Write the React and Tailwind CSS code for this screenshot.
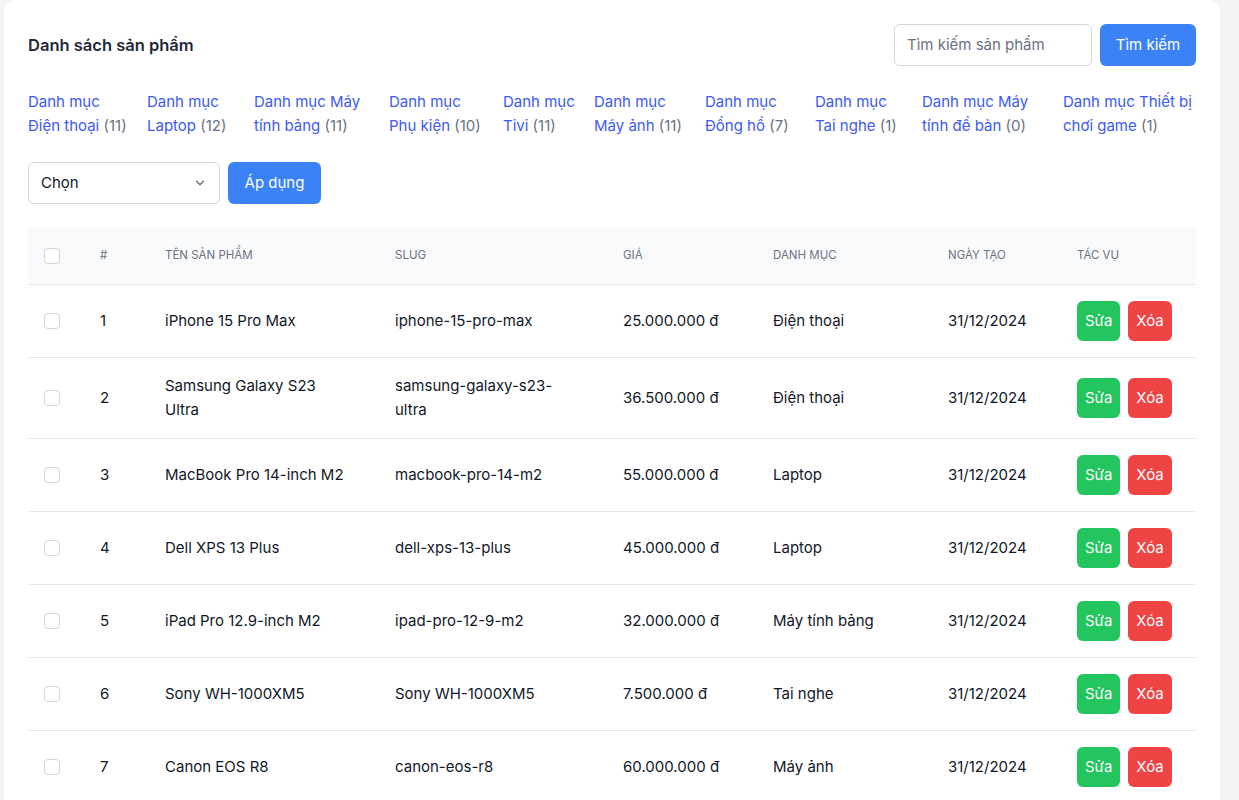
import React from "react";

const cats = [
  ["Danh mục", "Điện thoại", "(11)", "w-[119px]"],
  ["Danh mục", "Laptop", "(12)", "w-[107px]"],
  ["Danh mục Máy", "tính bảng", "(11)", "w-[135px]"],
  ["Danh mục", "Phụ kiện", "(10)", "w-[114px]"],
  ["Danh mục", "Tivi", "(11)", "w-[91px]"],
  ["Danh mục", "Máy ảnh", "(11)", "w-[111px]"],
  ["Danh mục", "Đồng hồ", "(7)", "w-[110px]"],
  ["Danh mục", "Tai nghe", "(1)", "w-[107px]"],
  ["Danh mục Máy", "tính để bàn", "(0)", "w-[141px]"],
  ["Danh mục Thiết bị", "chơi game", "(1)", "w-[133px]"],
];

const rows = [
  [1, "iPhone 15 Pro Max", "iphone-15-pro-max", "25.000.000 đ", "Điện thoại"],
  [2, "Samsung Galaxy S23 Ultra", "samsung-galaxy-s23-ultra", "36.500.000 đ", "Điện thoại"],
  [3, "MacBook Pro 14-inch M2", "macbook-pro-14-m2", "55.000.000 đ", "Laptop"],
  [4, "Dell XPS 13 Plus", "dell-xps-13-plus", "45.000.000 đ", "Laptop"],
  [5, "iPad Pro 12.9-inch M2", "ipad-pro-12-9-m2", "32.000.000 đ", "Máy tính bảng"],
  [6, "Sony WH-1000XM5", "Sony WH-1000XM5", "7.500.000 đ", "Tai nghe"],
  [7, "Canon EOS R8", "canon-eos-r8", "60.000.000 đ", "Máy ảnh"],
];

function Check() {
  return <div className="w-4 h-4 rounded border border-gray-300 bg-white" />;
}

export default function App() {
  return (
    <div
      className="min-h-screen bg-[#f3f4f6] pl-1 pr-[19px]"
      style={{ fontFamily: "Inter, 'Noto Sans', sans-serif" }}
    >
      <div className="bg-white rounded-t-xl px-6 pt-6 pb-6 text-[15px] text-[#111827]">
        <div className="flex items-center justify-between">
          <h2 className="text-[16.5px] font-semibold text-[#1f2937]">Danh sách sản phẩm</h2>
          <div className="flex items-center gap-2">
            <div className="w-[198px] h-[42px] border border-gray-300 rounded-md flex items-center px-3 text-[15px] text-gray-500">
              Tìm kiếm sản phẩm
            </div>
            <button className="h-[42px] w-[96px] rounded-md bg-[#3b82f6] text-white text-[15px]">Tìm kiếm</button>
          </div>
        </div>

        <div className="flex mt-[24px] leading-6">
          {cats.map(([a, b, c, w], i) => (
            <div key={i} className={`${w} shrink-0`}>
              <div className="text-[#3d5af1] whitespace-nowrap">{a}</div>
              <div className="whitespace-nowrap">
                <span className="text-[#3d5af1]">{b}</span>{" "}
                <span className="text-gray-500">{c}</span>
              </div>
            </div>
          ))}
        </div>

        <div className="flex items-center gap-2 mt-[24px]">
          <div className="w-[192px] h-[42px] border border-gray-300 rounded-md flex items-center justify-between pl-3 pr-3 text-[15px]">
            <span>Chọn</span>
            <svg width="14" height="14" viewBox="0 0 24 24" fill="none" stroke="#6b7280" strokeWidth="2.5" strokeLinecap="round" strokeLinejoin="round">
              <path d="M6 9l6 6 6-6" />
            </svg>
          </div>
          <button className="h-[42px] w-[93px] rounded-md bg-[#3b82f6] text-white text-[15px]">Áp dụng</button>
        </div>

        <table className="w-full table-fixed mt-[24px] border-collapse">
          <colgroup>
            <col className="w-[48px]" />
            <col className="w-[65px]" />
            <col className="w-[230px]" />
            <col className="w-[228px]" />
            <col className="w-[150px]" />
            <col className="w-[175px]" />
            <col className="w-[129px]" />
            <col className="w-[143px]" />
          </colgroup>
          <thead>
            <tr className="bg-[#f9fafb] border-b border-gray-200 h-[56px] text-left text-[11.5px] text-gray-500 uppercase">
              <th className="pl-4 font-normal"><Check /></th>
              <th className="px-6 font-normal">#</th>
              <th className="px-6 font-normal">Tên sản phẩm</th>
              <th className="px-6 font-normal">Slug</th>
              <th className="px-6 font-normal">Giá</th>
              <th className="px-6 font-normal">Danh mục</th>
              <th className="px-6 font-normal">Ngày tạo</th>
              <th className="px-6 font-normal">Tác vụ</th>
            </tr>
          </thead>
          <tbody>
            {rows.map(([n, name, slug, price, cat]) => (
              <tr key={n} className="border-b border-gray-200 leading-6">
                <td className="pl-4 py-4"><Check /></td>
                <td className="px-6 py-4">{n}</td>
                <td className="px-6 py-4">{name}</td>
                <td className="px-6 py-4 break-words">{slug}</td>
                <td className="px-6 py-4 whitespace-nowrap">{price}</td>
                <td className="px-6 py-4">{cat}</td>
                <td className="px-6 py-4">31/12/2024</td>
                <td className="px-6 py-4">
                  <div className="flex gap-2">
                    <button className="h-10 px-2 rounded-md bg-[#22c55e] text-white text-[15px]">Sửa</button>
                    <button className="h-10 px-2 rounded-md bg-[#ef4444] text-white text-[15px]">Xóa</button>
                  </div>
                </td>
              </tr>
            ))}
          </tbody>
        </table>
      </div>
    </div>
  );
}
